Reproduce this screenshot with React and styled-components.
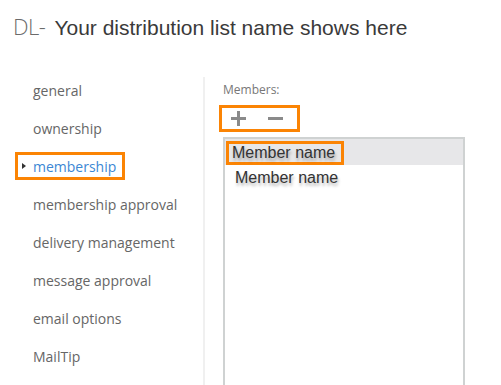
import React from "react";
import styled, { createGlobalStyle } from "styled-components";

const GlobalStyle = createGlobalStyle`
  html, body {
    margin: 0;
    padding: 0;
    background: #fff;
    overflow: hidden;
  }
  body {
    font-family: "Open Sans", "Noto Sans", sans-serif;
  }
`;

const navItems = [
  "general",
  "ownership",
  "membership",
  "membership approval",
  "delivery management",
  "message approval",
  "email options",
  "MailTip",
];

const members = ["Member name", "Member name"];

const App = () => {
  return (
    <>
      <GlobalStyle />
      <Page>
        <Header>
          <Prefix>DL-</Prefix>
          <Title>Your distribution list name shows here</Title>
        </Header>
        <Body>
          <Nav>
            {navItems.map((item) =>
              item === "membership" ? (
                <NavItem key={item} $active>
                  <Selected>
                    <Caret />
                    {item}
                  </Selected>
                </NavItem>
              ) : (
                <NavItem key={item}>{item}</NavItem>
              )
            )}
          </Nav>
          <Divider />
          <Panel>
            <Label>Members:</Label>
            <Toolbar>
              <ToolButton aria-label="add">
                <svg width="17" height="17" viewBox="0 0 17 17">
                  <path d="M8.5 1v15M1 8.5h15" stroke="#8a8a8a" strokeWidth="3" />
                </svg>
              </ToolButton>
              <ToolButton aria-label="remove">
                <svg width="17" height="17" viewBox="0 0 17 17">
                  <path d="M1 8.5h15" stroke="#8a8a8a" strokeWidth="3" />
                </svg>
              </ToolButton>
            </Toolbar>
            <MemberList>
              {members.map((name, i) => (
                <MemberRow key={i} $selected={i === 0}>
                  {i === 0 ? <MemberMark>{name}</MemberMark> : name}
                </MemberRow>
              ))}
            </MemberList>
          </Panel>
        </Body>
      </Page>
    </>
  );
};

const Page = styled.div`
  width: 501px;
  height: 385px;
  display: flex;
  flex-direction: column;
`;

const Header = styled.div`
  display: flex;
  align-items: baseline;
  gap: 9px;
  padding: 11px 0 0 13px;
  height: 60px;
  box-sizing: border-box;
`;

const Prefix = styled.span`
  font-family: "Open Sans", "Noto Sans", sans-serif;
  font-weight: 300;
  font-size: 22px;
  color: #6b6b6b;
  letter-spacing: -0.5px;
`;

const Title = styled.span`
  font-family: "Liberation Sans", Arial, sans-serif;
  font-size: 21px;
  color: #3a3a3a;
`;

const Body = styled.div`
  flex: 1;
  display: flex;
  margin-top: 11px;
  min-height: 0;
`;

const Nav = styled.nav`
  width: 203px;
  display: flex;
  flex-direction: column;
`;

const NavItem = styled.div`
  height: 38px;
  display: flex;
  align-items: center;
  padding-left: ${(p) => (p.$active ? "15px" : "33px")};
  font-size: 14px;
  color: #666;
`;

const Selected = styled.span`
  display: inline-flex;
  align-items: center;
  height: 28px;
  box-sizing: border-box;
  border: 3px solid #fb8404;
  padding: 0 6px 0 4px;
  color: #3b87d4;
`;

const Caret = styled.span`
  width: 0;
  height: 0;
  border-top: 3.5px solid transparent;
  border-bottom: 3.5px solid transparent;
  border-left: 4px solid #333;
  margin-right: 7px;
`;

const Divider = styled.div`
  width: 2px;
  margin-top: 6px;
  background: #f0f0f0;
`;

const Panel = styled.div`
  flex: 1;
  padding: 11px 0 0 14px;
  display: flex;
  flex-direction: column;
  align-items: flex-start;
`;

const Label = styled.div`
  font-size: 12px;
  line-height: 16px;
  color: #777;
  padding-left: 4px;
`;

const Toolbar = styled.div`
  margin-top: 7px;
  width: 81px;
  height: 28px;
  box-sizing: border-box;
  border: 3px solid #fb8404;
  display: flex;
  align-items: center;
  gap: 20px;
  padding-left: 8px;
`;

const ToolButton = styled.span`
  display: flex;
  width: 17px;
  height: 17px;
`;

const MemberList = styled.div`
  margin: 5px 0 0 4px;
  width: 242px;
  height: 260px;
  box-sizing: border-box;
  border: 2px solid #cfd2d2;
  border-bottom: none;
`;

const MemberRow = styled.div`
  height: 26px;
  display: flex;
  align-items: center;
  padding-left: ${(p) => (p.$selected ? "1px" : "10px")};
  background: ${(p) => (p.$selected ? "#e7e7e9" : "transparent")};
  font-family: "Liberation Sans", Arial, sans-serif;
  font-size: 16px;
  color: #333;
  text-shadow: 1px 3px 3px rgba(0, 0, 0, 0.3);
`;

const MemberMark = styled.span`
  display: inline-flex;
  align-items: center;
  height: 24px;
  margin-top: 2px;
  box-sizing: border-box;
  border: 3px solid #fb8404;
  padding: 0 6px 0 3px;
`;

export default App;
